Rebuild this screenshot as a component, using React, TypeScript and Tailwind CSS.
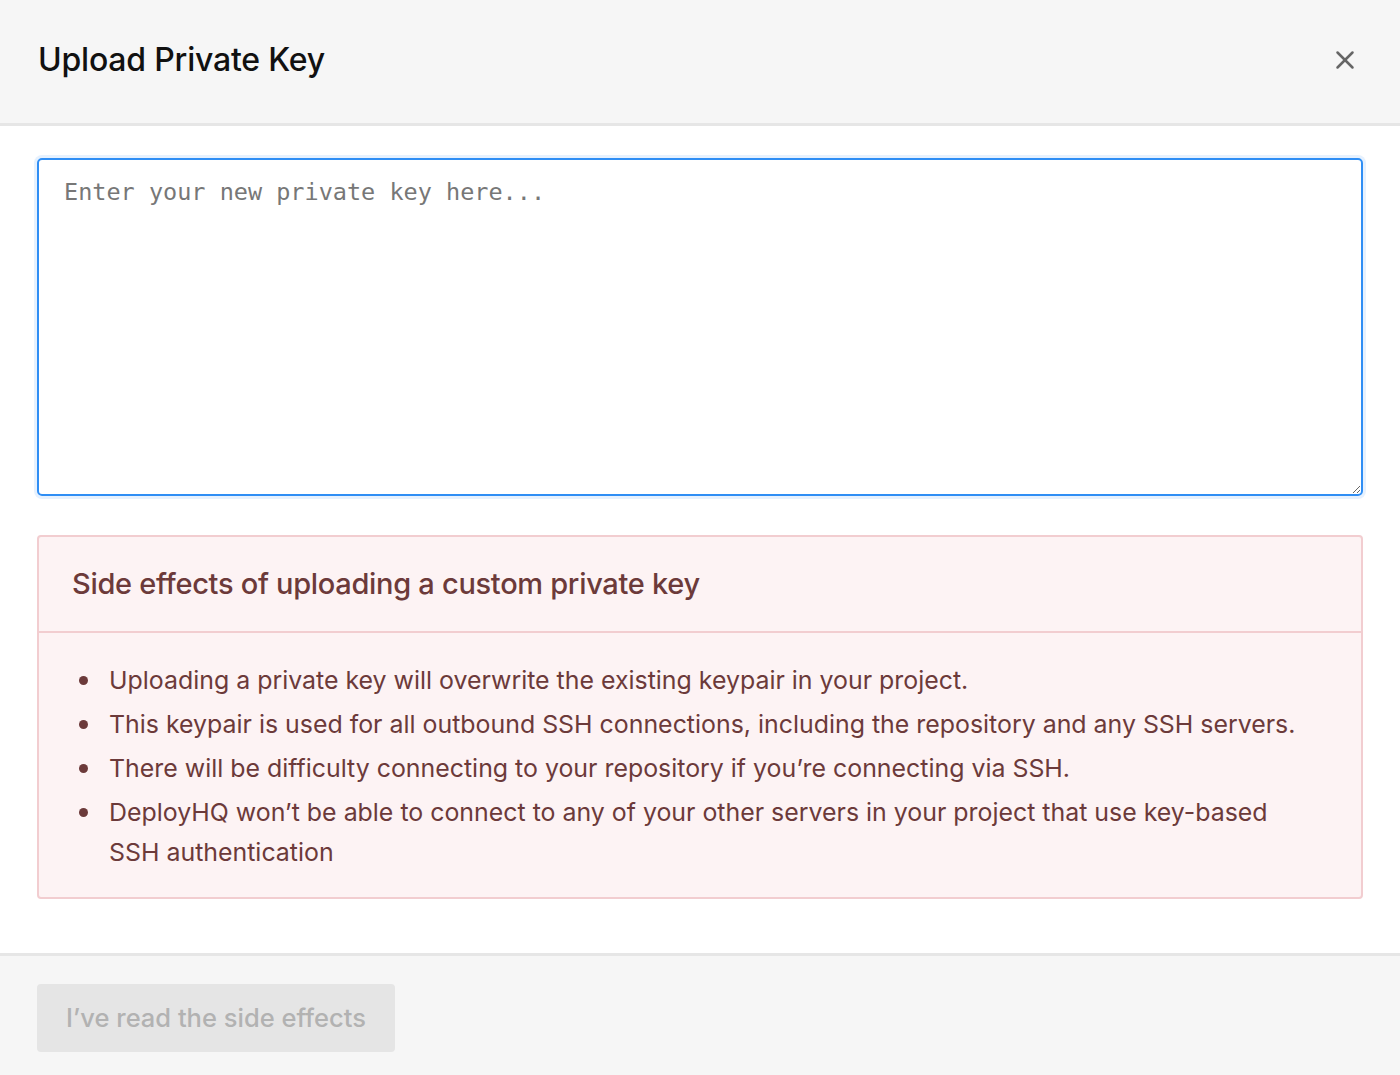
import { X } from 'lucide-react';

const sideEffects = [
    'Uploading a private key will overwrite the existing keypair in your project.',
    'This keypair is used for all outbound SSH connections, including the repository and any SSH servers.',
    'There will be difficulty connecting to your repository if you\u2019re connecting via SSH.',
    'DeployHQ won\u2019t be able to connect to any of your other servers in your project that use key-based SSH authentication',
];

export default function App() {
    return (
        <div className="w-[1400px] h-[1075px] bg-white flex flex-col font-['Inter','Liberation_Sans',sans-serif]">
            {/* Header */}
            <div className="h-[126px] shrink-0 bg-[#f6f6f6] border-b-[3px] border-[#e6e6e6] flex items-center justify-between pl-[38px] pr-[40px]">
                <h1 className="text-[32px] font-medium text-[#111] tracking-[-0.2px] -mt-[3px]">Upload Private Key</h1>
                <button className="text-[#666] -mt-[3px]">
                    <X size={30} strokeWidth={2} />
                </button>
            </div>

            {/* Body */}
            <div className="flex-1 px-[37px] pt-[32px]">
                <textarea
                    placeholder="Enter your new private key here..."
                    className="block w-full h-[338px] rounded-[5px] border-2 border-[#2f8ef4] shadow-[0_0_0_3px_rgba(47,142,244,0.12)] px-[25px] py-[14px] font-['DejaVu_Sans_Mono',monospace] text-[23.5px] leading-[36px] text-[#333] placeholder-[#777] outline-none"
                />

                <div className="mt-[39px] bg-[#fdf3f4] border-2 border-[#f2cdd0] rounded-[4px] text-[#6c3a3a]">
                    <div className="h-[96px] flex items-center px-[33px] border-b-2 border-[#f2cdd0]">
                        <h2 className="text-[29px] font-medium tracking-[-0.3px]">Side effects of uploading a custom private key</h2>
                    </div>
                    <ul className="pl-[40px] pr-[56px] pt-[27px] pb-[25px] text-[24.9px] leading-[40px]">
                        {sideEffects.map((item) => (
                            <li key={item} className="flex mb-[4px] last:mb-0">
                                <span className="w-[30px] shrink-0 flex pt-[16px]">
                                    <span className="w-[9px] h-[9px] rounded-full bg-[#6c3a3a]" />
                                </span>
                                <span>{item}</span>
                            </li>
                        ))}
                    </ul>
                </div>
            </div>

            {/* Footer */}
            <div className="h-[122px] shrink-0 bg-[#f6f6f6] border-t-[3px] border-[#e6e6e6] px-[37px] pt-[28px]">
                <button
                    disabled
                    className="h-[68px] px-[29px] rounded-[4px] bg-[#e5e5e5] text-[#b2b2b2] text-[25.5px] font-medium"
                >
                    I&rsquo;ve read the side effects
                </button>
            </div>
        </div>
    );
}
